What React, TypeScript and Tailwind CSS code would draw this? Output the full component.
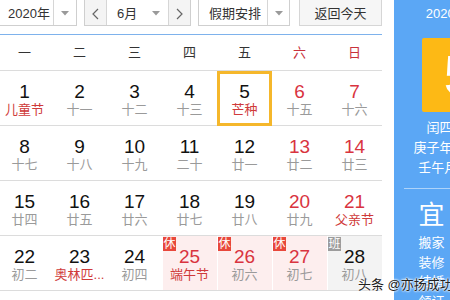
import React from 'react';

type Day = {
    n: number;
    sub: string;
    redNum?: boolean;
    redSub?: boolean;
    tag?: '休' | '班';
    selected?: boolean;
};

const weeks: Day[][] = [
    [
        { n: 1, sub: '儿童节', redSub: true },
        { n: 2, sub: '十一' },
        { n: 3, sub: '十二' },
        { n: 4, sub: '十三' },
        { n: 5, sub: '芒种', redSub: true, selected: true },
        { n: 6, sub: '十五', redNum: true },
        { n: 7, sub: '十六', redNum: true },
    ],
    [
        { n: 8, sub: '十七' },
        { n: 9, sub: '十八' },
        { n: 10, sub: '十九' },
        { n: 11, sub: '二十' },
        { n: 12, sub: '廿一' },
        { n: 13, sub: '廿二', redNum: true },
        { n: 14, sub: '廿三', redNum: true },
    ],
    [
        { n: 15, sub: '廿四' },
        { n: 16, sub: '廿五' },
        { n: 17, sub: '廿六' },
        { n: 18, sub: '廿七' },
        { n: 19, sub: '廿八' },
        { n: 20, sub: '廿九', redNum: true },
        { n: 21, sub: '父亲节', redNum: true, redSub: true },
    ],
    [
        { n: 22, sub: '初二' },
        { n: 23, sub: '奥林匹...', redSub: true },
        { n: 24, sub: '初四' },
        { n: 25, sub: '端午节', redNum: true, redSub: true, tag: '休' },
        { n: 26, sub: '初六', redNum: true, tag: '休' },
        { n: 27, sub: '初七', redNum: true, tag: '休' },
        { n: 28, sub: '初八', tag: '班' },
    ],
];

const weekNames = ['一', '二', '三', '四', '五', '六', '日'];

function Caret() {
    return (
        <svg width="8" height="5" viewBox="0 0 8 5">
            <path d="M0 0 L8 0 L4 4.5 Z" fill="#9a9a9a" />
        </svg>
    );
}

function Chevron({ dir }: { dir: 'l' | 'r' }) {
    return (
        <svg width="7" height="12" viewBox="0 0 7 12">
            <polyline
                points={dir === 'l' ? '6,1 1,6 6,11' : '1,1 6,6 1,11'}
                fill="none"
                stroke="#666"
                strokeWidth="1.2"
            />
        </svg>
    );
}

function DayCell({ d }: { d: Day }) {
    let bg = '';
    if (d.tag === '休') bg = 'bg-[#fdeeee]';
    if (d.tag === '班') bg = 'bg-[#f3f3f3]';
    return (
        <div className="relative h-[55px] border-b border-[#dcdcdc]">
            <div className={`absolute left-[1px] right-0 top-0 bottom-0 ${bg}`} />
            {d.selected && <div className="absolute inset-0 bottom-[-1px] border-[3px] border-[#f5b72b]" />}
            {d.tag && (
                <div
                    className={`absolute left-[1px] top-[1px] w-[13px] h-[14px] flex items-center justify-center text-[12px] leading-none text-white ${
                        d.tag === '休' ? 'bg-[#e8473b]' : 'bg-[#9c9c9c]'
                    }`}
                >
                    {d.tag}
                </div>
            )}
            <div className="relative flex flex-col items-center pt-[10px]">
                <div className={`text-[19px] leading-[21px] ${d.redNum ? 'text-[#d9343f]' : 'text-[#111]'}`}>{d.n}</div>
                <div className={`text-[13px] leading-[16px] whitespace-nowrap ${d.redSub ? 'text-[#cf3a3a]' : 'text-[#9a9a9a]'}`}>
                    {d.sub}
                </div>
            </div>
        </div>
    );
}

export default function App() {
    return (
        <div className="relative w-[450px] h-[300px] overflow-hidden bg-white flex font-['Liberation_Sans','Noto_Sans_CJK_SC',sans-serif]">
            {/* calendar */}
            <div className="w-[394px] shrink-0">
                <div className="w-[382px]">
                    {/* toolbar */}
                    <div className="flex h-[30px] -mt-[4px] text-[13px] text-[#333] whitespace-nowrap">
                        <div className="flex w-[78px] -ml-[1px] border border-[#cfcfcf] bg-white">
                            <div className="w-[54px] flex items-center pl-[8px] pt-[5px] border-r border-[#d6d6d6]">2020年</div>
                            <div className="flex-1 flex items-center justify-center pt-[5px]"><Caret /></div>
                        </div>
                        <div className="flex ml-[7px] w-[107px] border border-[#cfcfcf]">
                            <div className="w-[22px] flex items-center justify-center pt-[5px] bg-[#f4f4f4] border-r border-[#d6d6d6]">
                                <Chevron dir="l" />
                            </div>
                            <div className="flex-1 flex items-center pl-[10px] pt-[5px] bg-white">
                                <span className="flex-1">6月</span>
                                <span className="pr-[8px] flex"><Caret /></span>
                            </div>
                            <div className="w-[22px] flex items-center justify-center pt-[5px] bg-[#f4f4f4] border-l border-[#d6d6d6]">
                                <Chevron dir="r" />
                            </div>
                        </div>
                        <div className="flex ml-[7px] w-[92px] border border-[#cfcfcf] bg-white">
                            <div className="w-[69px] flex items-center pl-[10px] pt-[5px] border-r border-[#d6d6d6]">假期安排</div>
                            <div className="flex-1 flex items-center justify-center pt-[5px]"><Caret /></div>
                        </div>
                        <div className="ml-[9px] flex-1 flex items-center justify-center pt-[5px] border border-[#d6d6d6] bg-[#f6f6f6]">
                            返回今天
                        </div>
                    </div>
                    <div className="mt-[8px] h-[1px] bg-[#7eb2ec]" />
                    {/* week header */}
                    <div className="grid grid-cols-7 -ml-[3px] w-[385px] h-[36px] border-b border-[#dcdcdc] text-[13px]">
                        {weekNames.map((w, i) => (
                            <div key={w} className={`flex items-center justify-center pt-[1px] ${i >= 5 ? 'text-[#c8323c]' : 'text-[#333]'}`}>
                                {w}
                            </div>
                        ))}
                    </div>
                    {/* days */}
                    <div className="grid grid-cols-7 -ml-[3px] w-[385px]">
                        {weeks.flat().map((d) => (
                            <DayCell key={d.n} d={d} />
                        ))}
                    </div>
                </div>
            </div>

            {/* right panel */}
            <div className="flex-1 bg-[#5ba7f5] text-white">
                <div className="w-[130px] flex flex-col items-center px-[10px]">
                    <div className="mt-[6px] text-[13px] leading-[16px] whitespace-nowrap">2020-06-05</div>
                    <div className="mt-[16px] w-[74px] h-[74px] rounded-[2px] bg-[#fdb915] flex items-center justify-center text-[56px] leading-none">
                        5
                    </div>
                    <div className="mt-[6px] text-[13px] leading-[20px] text-center whitespace-nowrap">
                        <div>闰四月十四</div>
                        <div>庚子年【鼠年】</div>
                        <div>壬午月 己卯日</div>
                    </div>
                    <div className="mt-[10px] h-[1px] w-full bg-white/50" />
                    <div className="w-full grid grid-cols-2">
                        <div className="flex flex-col items-center">
                            <div className="mt-[12px] text-[26px] leading-[28px]">宜</div>
                            <div className="mt-[4px] text-[13px] leading-[19.5px] text-center">
                                <div>搬家</div>
                                <div>装修</div>
                                <div>结婚</div>
                                <div>领证</div>
                            </div>
                        </div>
                        <div className="flex flex-col items-center">
                            <div className="mt-[12px] text-[26px] leading-[28px]">忌</div>
                            <div className="mt-[4px] text-[13px] leading-[19.5px] text-center">
                                <div>开业</div>
                                <div>动土</div>
                            </div>
                        </div>
                    </div>
                </div>
            </div>

            {/* watermark */}
            <div className="absolute left-[358px] top-[276px] text-[13px] leading-[18px] text-[#222] whitespace-nowrap [text-shadow:0_0_2px_#fff,0_0_2px_#fff,0_0_3px_#fff]">
                头条 @亦扬成功
            </div>
        </div>
    );
}
